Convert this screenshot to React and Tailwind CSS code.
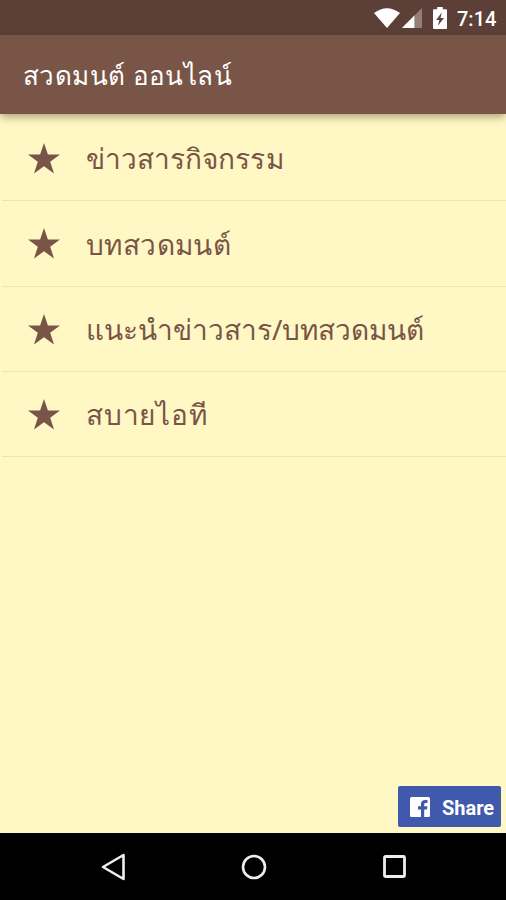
const items = [
  { label: "ข่าวสารกิจกรรม", row: "h-[87px] pt-[2px]", tracking: "tracking-[0.05px]" },
  { label: "บทสวดมนต์", row: "h-[86px]", tracking: "tracking-[0.4px]" },
  { label: "แนะนำข่าวสาร/บทสวดมนต์", row: "h-[85px]", tracking: "tracking-normal" },
  { label: "สบายไอที", row: "h-[85px]", tracking: "tracking-[0.8px]" },
];

function StatusBar() {
  return (
    <div className="flex h-[35px] shrink-0 items-center justify-end bg-[#5c4038] pr-[10px] text-white">
      <svg className="h-[21px] w-[26px]" viewBox="0 0 26 22" preserveAspectRatio="none" fill="white">
        <path d="M0 6.2Q13-3.6 26 6.2L13 22Z" />
      </svg>
      <svg className="ml-[2px] h-[20px] w-[20px]" viewBox="0 0 21 21">
        <path d="M21 0V21H0Z" fill="#957f79" />
        <path d="M13 8V21H0Z" fill="white" />
      </svg>
      <svg className="ml-[11px] h-[22px] w-[14px]" viewBox="0 0 15 22" preserveAspectRatio="none">
        <path d="M4.5 0h6v2.2H14a1 1 0 0 1 1 1V21a1 1 0 0 1-1 1H1a1 1 0 0 1-1-1V3.200a1 1 0 0 1 1-1h3.500Z" fill="white" />
        <path d="M9.300 5.500 3.300 13h3.500l-1.500 5.800L11.700 11H8.100Z" fill="#5c4038" />
      </svg>
      <span className="ml-[10px] w-[39px] translate-y-[1px] whitespace-nowrap text-[20px] font-medium leading-[36px]">7:14</span>
    </div>
  );
}

function Star() {
  return (
    <svg className="h-[31px] w-[32px] shrink-0" viewBox="0 0 32 31" fill="#795548">
      <path d="M16 0 19.900 11.600H32L22.200 18.800 26 30.500 16 23.300 6 30.500 9.800 18.800 0 11.600H12.100Z" />
    </svg>
  );
}

export default function App() {
  return (
    <div className="flex h-[900px] w-[506px] flex-col overflow-hidden bg-[#fff7c4] font-['Roboto','Noto_Sans',sans-serif]">
      <StatusBar />
      <header className="z-10 flex h-[79px] shrink-0 items-center bg-[#795548] pl-[23px] shadow-[0_4px_8px_-1px_rgba(70,60,20,0.45)]">
        <h1 className="whitespace-nowrap font-['Noto_Sans',sans-serif] text-[26px] leading-[40px] tracking-[0.4px] text-white">สวดมนต์ ออนไลน์</h1>
      </header>
      <main className="flex min-h-0 flex-1 flex-col">
        <ul className="ml-[2px]">
          {items.map((item) => (
            <li key={item.label} className={`flex items-center border-b border-[#ede4b5] pl-[26px] ${item.row}`}>
              <Star />
              <span className={`ml-[26px] whitespace-nowrap font-['Noto_Sans',sans-serif] text-[28px] leading-[42px] text-[#795548] ${item.tracking}`}>
                {item.label}
              </span>
            </li>
          ))}
        </ul>
        <button className="mb-[6px] ml-auto mr-[5px] mt-auto flex h-[41px] w-[103px] items-center rounded-[2px] bg-[#4059ad] pl-[12px] text-white">
          <svg className="h-[20px] w-[20px]" viewBox="0 0 20 20">
            <rect width="20" height="20" rx="1.500" fill="white" />
            <path d="M11 20V12.500H8V9.300H11V7.200C11 4.300 12.800 3 15.300 3H17.500V6H15.800C14.600 6 14.200 6.600 14.200 7.600V9.300H17.400L16.900 12.500H14.200V20Z" fill="#4059ad" />
          </svg>
          <span className="ml-[12px] translate-y-[1px] text-[20px] font-bold leading-6">Share</span>
        </button>
      </main>
      <nav className="flex h-[67px] shrink-0 items-center justify-between bg-black pl-[101px] pr-[99px]">
        <svg className="h-[28px] w-[25px]" viewBox="0 0 25 28" fill="none" stroke="#eee" strokeWidth="2.600" strokeLinejoin="round">
          <path d="M22.500 2V26L2 14Z" />
        </svg>
        <svg className="h-[26px] w-[26px]" viewBox="0 0 26 26" fill="none" stroke="#eee" strokeWidth="2.600">
          <circle cx="13" cy="13" r="11" />
        </svg>
        <svg className="h-[25px] w-[25px]" viewBox="0 0 25 25" fill="none" stroke="#eee" strokeWidth="2.800">
          <rect x="2.500" y="2.500" width="20" height="20" rx="1" />
        </svg>
      </nav>
    </div>
  );
}
